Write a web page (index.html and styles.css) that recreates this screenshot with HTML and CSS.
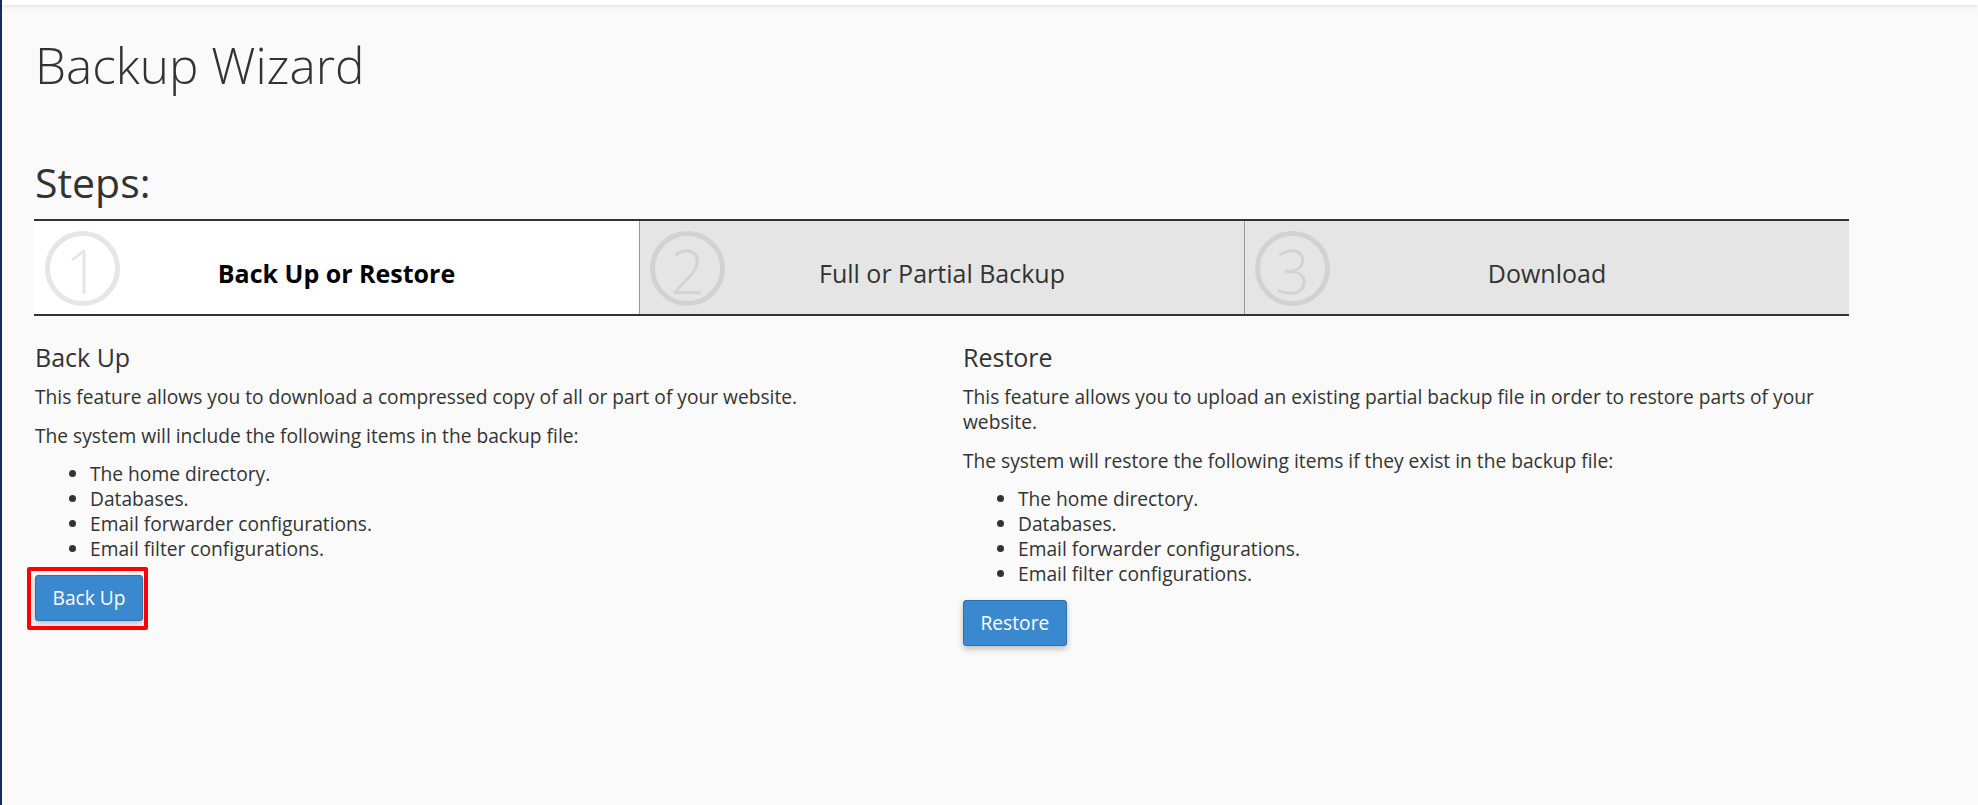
FILE: index.html
```html
<!DOCTYPE html>
<html lang="en">
<head>
<meta charset="utf-8">
<title>Backup Wizard</title>
<link rel="stylesheet" href="styles.css">
</head>
<body>
<div class="page">
  <div class="topbar"></div>
  <main class="content">
    <h1 class="title">Backup Wizard</h1>
    <h2 class="steps-heading">Steps:</h2>
    <div class="steps">
      <div class="step step-active">
        <span class="step-num">1</span>
        <span class="step-label">Back Up or Restore</span>
      </div>
      <div class="step">
        <span class="step-num">2</span>
        <span class="step-label">Full or Partial Backup</span>
      </div>
      <div class="step">
        <span class="step-num">3</span>
        <span class="step-label">Download</span>
      </div>
    </div>
    <div class="columns">
      <section class="col">
        <h3 class="col-title">Back Up</h3>
        <p>This feature allows you to download a compressed copy of all or part of your website.</p>
        <p>The system will include the following items in the backup file:</p>
        <ul class="items">
          <li>The home directory.</li>
          <li>Databases.</li>
          <li>Email forwarder configurations.</li>
          <li>Email filter configurations.</li>
        </ul>
        <div class="actions">
          <span class="highlight"><button class="btn" type="button">Back Up</button></span>
        </div>
      </section>
      <section class="col">
        <h3 class="col-title">Restore</h3>
        <p>This feature allows you to upload an existing partial backup file in order to restore parts of your website.</p>
        <p>The system will restore the following items if they exist in the backup file:</p>
        <ul class="items">
          <li>The home directory.</li>
          <li>Databases.</li>
          <li>Email forwarder configurations.</li>
          <li>Email filter configurations.</li>
        </ul>
        <div class="actions">
          <button class="btn" type="button">Restore</button>
        </div>
      </section>
    </div>
  </main>
</div>
</body>
</html>
```

FILE: styles.css
```css
html, body {
  margin: 0;
  padding: 0;
}

body {
  background: #fafafa;
  font-family: "Open Sans", "Liberation Sans", sans-serif;
  color: #333;
}

.page {
  min-height: 805px;
  border-left: 2px solid #1b2a5c;
  box-sizing: border-box;
}

.topbar {
  height: 5px;
  background: #fff;
  box-shadow: 0 1px 5px rgba(0, 0, 0, 0.12);
}

.content {
  padding: 0 0 0 33px;
}

.title {
  margin: 30px 0 0;
  font-size: 49.5px;
  line-height: 60px;
  font-weight: 300;
  color: #333;
}

.steps-heading {
  margin: 64px 0 0;
  font-size: 41px;
  line-height: 46px;
  font-weight: 400;
  color: #333;
}

.steps {
  display: grid;
  grid-template-columns: repeat(3, 605px);
  margin: 14px 0 0 -1px;
  border-top: 2px solid #333;
  border-bottom: 2px solid #333;
  width: 1815px;
}

.step {
  display: grid;
  height: 93px;
  background: #e5e5e5;
  border-left: 1px solid #999;
  box-sizing: border-box;
}

.step > * {
  grid-area: 1 / 1;
}

.step-active {
  background: #fff;
  border-left: 0;
}

.step-num {
  justify-self: start;
  align-self: start;
  margin: 10px 0 0 10px;
  width: 75px;
  height: 75px;
  box-sizing: border-box;
  border: 5px solid #d2d2d2;
  border-radius: 50%;
  display: flex;
  align-items: center;
  justify-content: center;
  font-size: 60px;
  line-height: 1;
  font-weight: 300;
  color: #d2d2d2;
  padding-top: 4px;
}

.step-active .step-num {
  margin-left: 11px;
  border-color: #e6e6e6;
  color: #e6e6e6;
}

.step-label {
  justify-self: center;
  align-self: center;
  margin-top: 12px;
  font-size: 25px;
  line-height: 35px;
  color: #333;
}

.step-active .step-label {
  font-weight: 700;
  color: #000;
}

.columns {
  display: grid;
  grid-template-columns: 898px 898px;
  column-gap: 30px;
  margin-top: 26px;
}

.col-title {
  margin: 0 0 12px;
  font-size: 25px;
  line-height: 30px;
  font-weight: 400;
  color: #333;
}

.col p {
  margin: 0 0 13.5px;
  font-size: 19.2px;
  line-height: 25px;
}

.items {
  margin: 0 0 13.5px;
  padding-left: 55px;
  font-size: 19.2px;
  line-height: 25px;
}

.actions {
  display: flex;
}

.highlight {
  position: relative;
  display: flex;
}

.highlight::after {
  content: "";
  position: absolute;
  left: -8px;
  top: -8px;
  right: -5px;
  bottom: -9px;
  border: 4px solid #ff0000;
  border-radius: 2px;
  pointer-events: none;
}

.btn {
  font-family: inherit;
  font-size: 19.2px;
  line-height: 25px;
  padding: 9.5px 16.5px;
  color: #fff;
  background: #3a88cd;
  border: 1px solid #2e70ac;
  border-radius: 3px;
  box-shadow: 0 3px 6px rgba(0, 0, 0, 0.25);
  cursor: pointer;
}
```
